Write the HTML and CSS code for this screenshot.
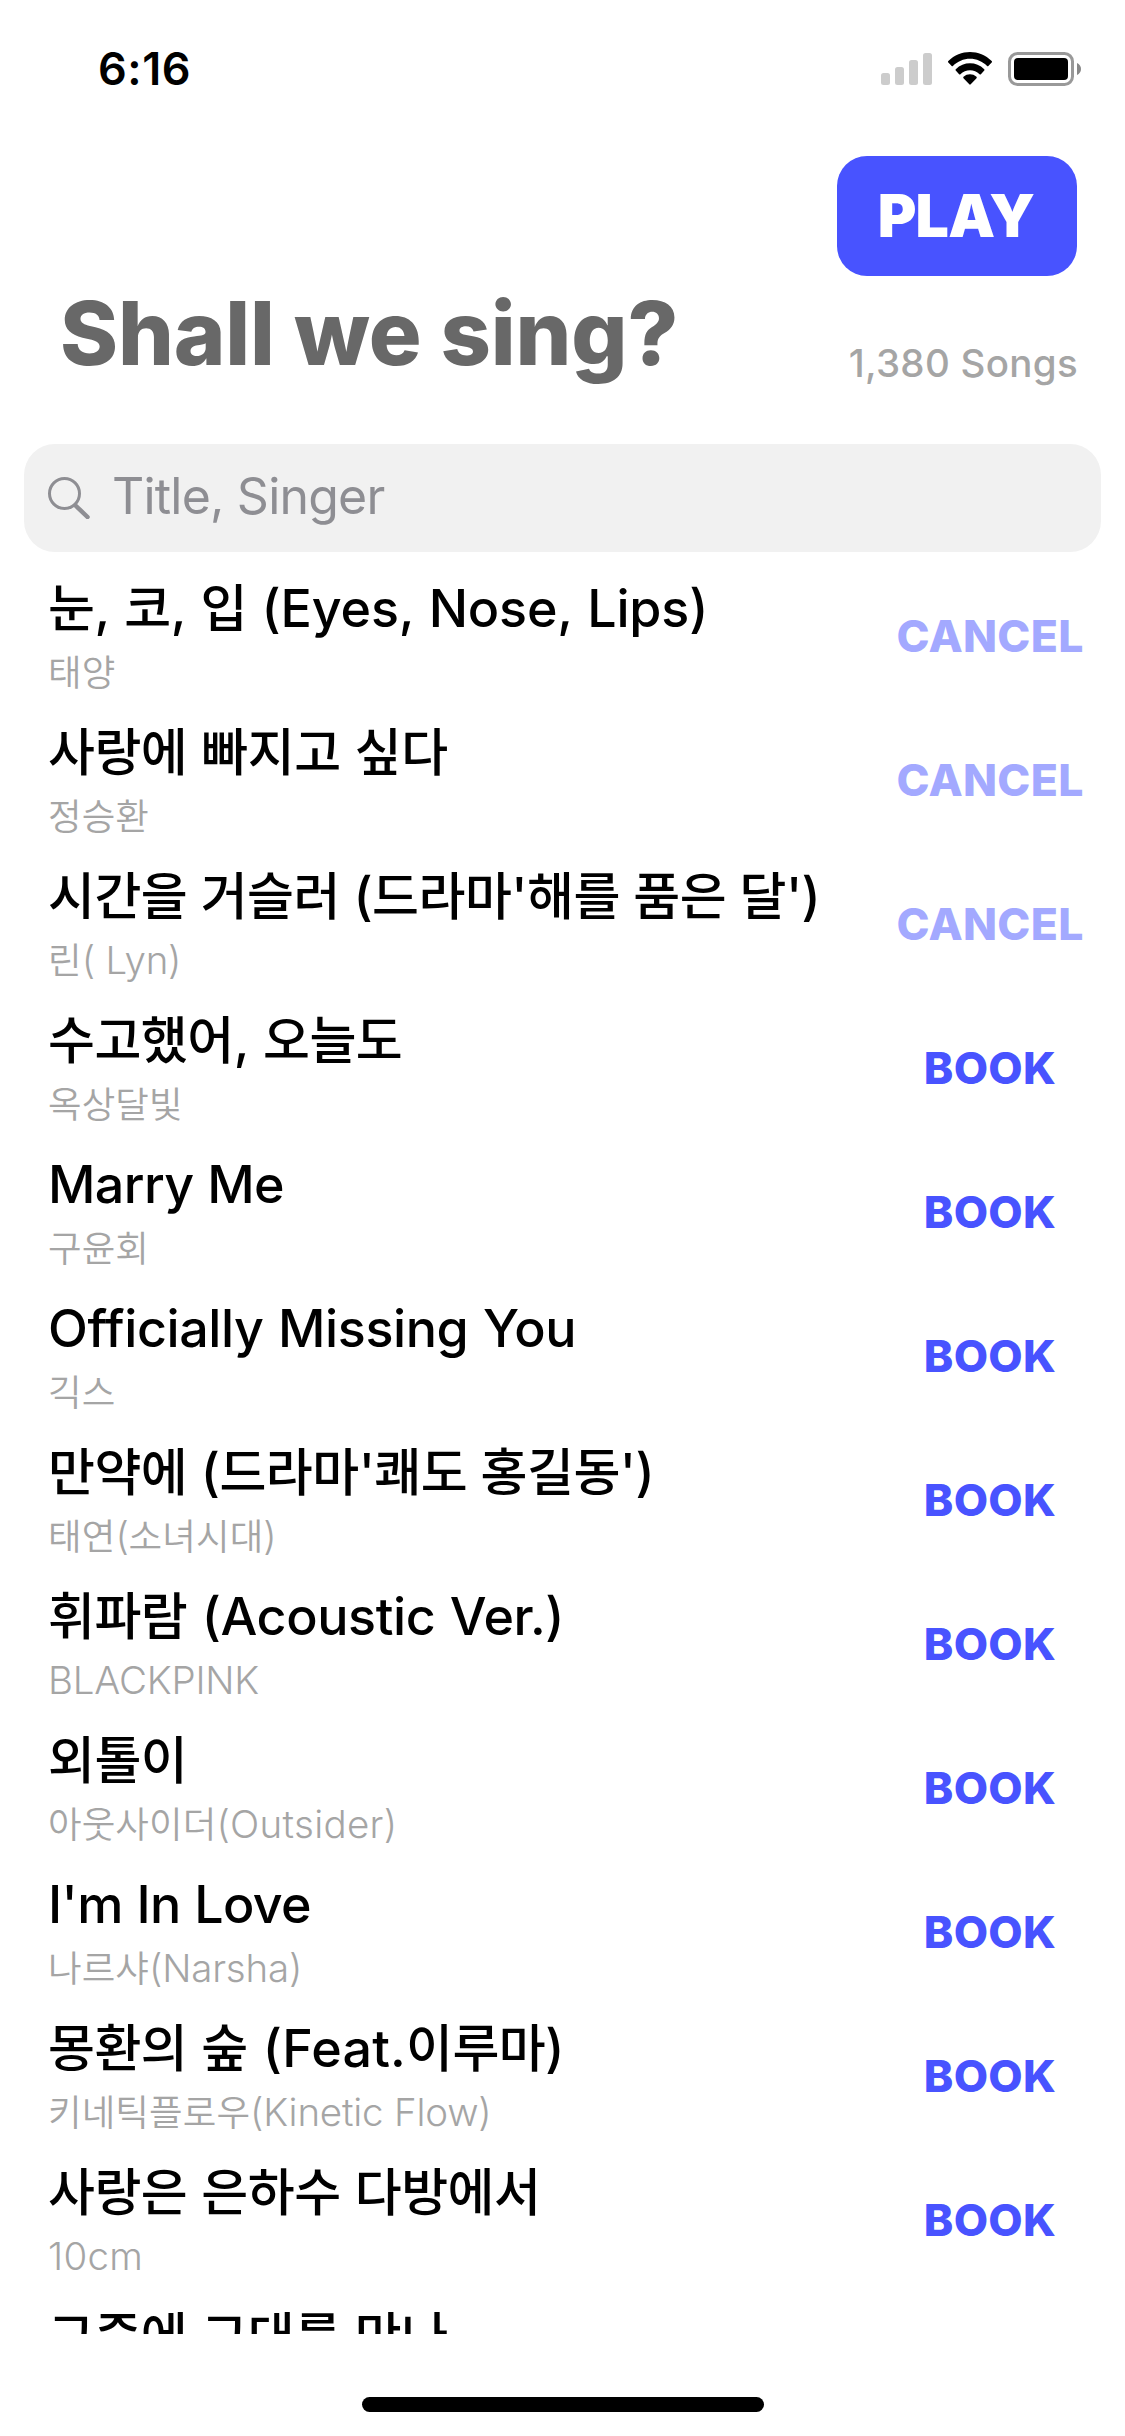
FILE: index.html
```html
<!DOCTYPE html>
<html lang="ko">
<head>
<meta charset="utf-8">
<title>Shall we sing?</title>
<link rel="stylesheet" href="styles.css">
</head>
<body>
<div class="screen">
  <header class="status">
    <span class="time">6:16</span>
    <div class="indicators">
      <svg class="signal" viewBox="0 0 51 32"><rect x="0" y="20" width="9" height="12" rx="2.5"/><rect x="14" y="14" width="9" height="18" rx="2.5"/><rect x="28" y="7" width="9" height="25" rx="2.5"/><rect x="42" y="0" width="9" height="32" rx="2.5"/></svg>
      <svg class="wifi" viewBox="0.4 0.7 45.200 31" preserveAspectRatio="none"><path d="M23 7c6.300 0 12.300 2.500 16.800 6.800.3.300.9.300 1.200 0l3.300-3.300c.4-.4.400-1 0-1.300-11.900-11.300-30.700-11.300-42.600 0-.4.300-.4.900 0 1.300L5 13.800c.3.300.9.300 1.200 0C10.700 9.500 16.700 7 23 7z"/><path d="M23 17.900c3.500 0 6.800 1.300 9.400 3.600.4.300.9.300 1.300 0l3.300-3.400c.4-.3.400-.9 0-1.300-7.900-7.400-20.100-7.400-28 0-.4.400-.4 1 0 1.300l3.300 3.400c.4.300.9.300 1.300 0 2.600-2.300 5.900-3.600 9.400-3.600z"/><path d="M29.400 25.300c.4-.4.400-1 0-1.300-3.700-3.100-9.100-3.100-12.800 0-.4.300-.4.900 0 1.300l5.700 5.800c.4.400 1 .4 1.400 0z"/></svg>
      <svg class="battery" viewBox="0 0 73 34"><rect class="shell" x="1.500" y="1.500" width="63" height="31" rx="8"/><rect x="6" y="6" width="54" height="22" rx="4"/><path class="tip" d="M69 11v12c2.500-1 4-3.400 4-6s-1.500-5-4-6z"/></svg>
    </div>
  </header>
  <section class="hero">
    <h1>Shall we sing?</h1>
    <div class="side"><button class="play">PLAY</button><span class="count">1,380 Songs</span></div>
  </section>
  <div class="search">
    <svg viewBox="0 0 42 42"><circle cx="16.500" cy="16.500" r="15"/><path d="M27.500 28.500l12 11.500"/></svg>
    <span>Title, Singer</span>
  </div>
  <main class="list">
    <article><div class="song"><h2 class="loose"><b>눈</b>, <b>코</b>, <b>입</b> (Eyes, Nose, Lips)</h2><p><b>태양</b></p></div><button class="cancel">CANCEL</button></article>
    <article><div class="song"><h2><b>사랑에 빠지고 싶다</b></h2><p><b>정승환</b></p></div><button class="cancel">CANCEL</button></article>
    <article><div class="song"><h2 class="tight"><b>시간을 거슬러</b> (<b>드라마</b>'<b>해를 품은 달</b>')</h2><p><b>린</b>( Lyn)</p></div><button class="cancel">CANCEL</button></article>
    <article><div class="song"><h2><b>수고했어</b>, <b>오늘도</b></h2><p><b>옥상달빛</b></p></div><button>BOOK</button></article>
    <article><div class="song"><h2 class="tight">Marry Me</h2><p><b>구윤회</b></p></div><button>BOOK</button></article>
    <article><div class="song"><h2>Officially Missing You</h2><p><b>긱스</b></p></div><button>BOOK</button></article>
    <article><div class="song"><h2 class="tight"><b>만약에</b> (<b>드라마</b>'<b>쾌도 홍길동</b>')</h2><p><b>태연</b>(<b>소녀시대</b>)</p></div><button>BOOK</button></article>
    <article><div class="song"><h2><b>휘파람</b> (Acoustic Ver.)</h2><p>BLACKPINK</p></div><button>BOOK</button></article>
    <article><div class="song"><h2><b>외톨이</b></h2><p class="wide"><b>아웃사이더</b>(Outsider)</p></div><button>BOOK</button></article>
    <article><div class="song"><h2 class="tight">I'm In Love</h2><p><b>나르샤</b>(Narsha)</p></div><button>BOOK</button></article>
    <article><div class="song"><h2 class="wide"><b>몽환의 숲</b> (Feat.<b>이루마</b>)</h2><p><b>키네틱플로우</b>(Kinetic Flow)</p></div><button>BOOK</button></article>
    <article><div class="song"><h2><b>사랑은 은하수 다방에서</b></h2><p class="wide">10cm</p></div><button>BOOK</button></article>
    <article><div class="song"><h2><b>그중에 그대를 만나</b></h2></div></article>
  </main>
  <footer><div class="home"></div></footer>
</div>
</body>
</html>
```
FILE: styles.css
```css
* { box-sizing: border-box; }
body {
  margin: 0;
  background: #fff;
  color: #000;
  font-family: Inter, "Noto Sans CJK KR", sans-serif;
}
h1, h2, p { margin: 0; }
button {
  padding: 0;
  border: 0;
  background: none;
  font-family: inherit;
}
svg { display: block; }

.screen {
  display: flex;
  flex-direction: column;
  width: 1125px;
  height: 2436px;
  overflow: hidden;
}

.status {
  display: flex;
  justify-content: space-between;
  height: 156px;
  padding: 52px 44px 0 98px;
}
.time {
  font-size: 45px;
  font-weight: 600;
  letter-spacing: 0.5px;
  line-height: 34px;
}
.indicators {
  display: flex;
  align-items: flex-start;
}
.signal { width: 51px; height: 32px; margin: 1px 15px 0 0; fill: #ccc; }
.wifi { width: 46px; height: 33px; margin-right: 15px; }
.battery { width: 73px; height: 34px; }
.shell { fill: none; stroke: #999; stroke-width: 3; }
.tip { fill: #888; }

.hero {
  display: flex;
  justify-content: space-between;
  height: 288px;
  padding: 0 48px 0 60px;
}
h1 {
  padding-top: 122px;
  color: #686868;
  font-size: 88px;
  font-weight: 800;
  letter-spacing: -0.15px;
  line-height: 110px;
  white-space: nowrap;
}
.side {
  display: flex;
  flex-direction: column;
  align-items: flex-end;
}
.play {
  width: 240px;
  height: 120px;
  padding: 0 2px 1px 0;
  border-radius: 30px;
  background: #4853ff;
  color: #fff;
  font-size: 59px;
  font-weight: 900;
  letter-spacing: -0.8px;
}
.count {
  margin: 62px -1px 0 0;
  color: #a5a5a5;
  font-size: 38.5px;
  font-weight: 450;
  letter-spacing: 0.3px;
  line-height: 50px;
  white-space: nowrap;
}

.search {
  display: flex;
  align-items: center;
  height: 108px;
  margin: 0 24px;
  padding-left: 24px;
  border-radius: 31px;
  background: #f1f1f1;
  color: #8e8e93;
  font-size: 50px;
  letter-spacing: -0.8px;
}
.search svg {
  width: 42px;
  height: 42px;
  margin-right: 22px;
  fill: none;
  stroke: #8e8e93;
  stroke-width: 3;
  stroke-linecap: round;
}
.search path { stroke-width: 4.5; }
.search span { padding-bottom: 4px; }

.list {
  height: 1770px;
  margin-top: 12px;
  overflow: hidden;
}
article {
  display: flex;
  justify-content: space-between;
  height: 144px;
  padding: 0 36px 0 48px;
}
.song { padding-top: 10px; white-space: nowrap; }
h2 {
  height: 73px;
  font-size: 52px;
  font-weight: 500;
  letter-spacing: -0.4px;
  line-height: 70px;
  word-spacing: 1px;
}
h2.wide { letter-spacing: 0.2px; }
h2.loose { letter-spacing: -0.15px; }
h2.tight { letter-spacing: -0.6px; word-spacing: 0.3px; }
h2 b {
  font-size: 51px;
  font-weight: 500;
  letter-spacing: -0.5px;
}
p {
  height: 50px;
  color: #a5a5a5;
  font-size: 38.5px;
  font-weight: 300;
  letter-spacing: -0.2px;
  line-height: 50px;
}
p.wide { letter-spacing: 0.3px; }
p b {
  font-size: 36.5px;
  font-weight: 350;
  letter-spacing: 0.1px;
}
article button {
  width: 198px;
  color: #4853ff;
  font-size: 44.5px;
  font-weight: 800;
  letter-spacing: 0.3px;
}
article .cancel { color: #a3a9ff; }

footer {
  display: flex;
  justify-content: center;
  padding-top: 63px;
}
.home {
  width: 402px;
  height: 15px;
  border-radius: 8px;
  background: #000;
}
```
